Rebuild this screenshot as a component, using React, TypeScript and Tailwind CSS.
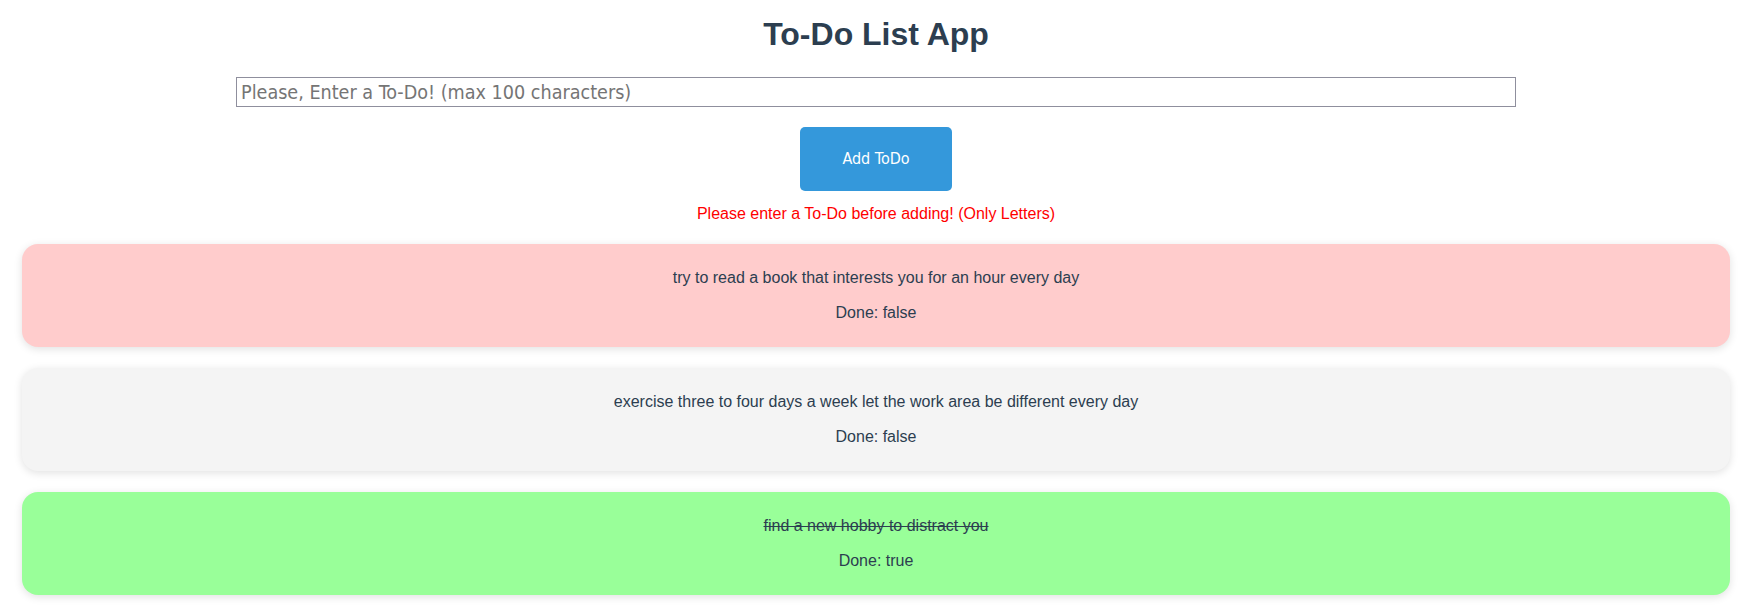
const todos = [
  { text: "try to read a book that interests you for an hour every day", done: false, bg: "bg-[#ffcccc]" },
  { text: "exercise three to four days a week let the work area be different every day", done: false, bg: "bg-[#f4f4f4]" },
  { text: "find a new hobby to distract you", done: true, bg: "bg-[#99ff99]" },
]

export default function App() {
  return (
    <div className="min-h-screen bg-white">
      <div className="flex w-full flex-col items-center pt-[16px] font-['Liberation_Sans',Arial,sans-serif] text-[#2c3e50]">
        <h1 className="text-[32px] leading-[37px] font-bold">To-Do List App</h1>

        <input
          type="text"
          placeholder="Please, Enter a To-Do! (max 100 characters)"
          className="mt-[24px] h-[30px] w-[1280px] border border-[#8f8f9d] px-[4px] font-['DejaVu_Sans_Condensed','DejaVu_Sans',sans-serif] text-[19.6px] text-[#2c3e50] outline-none placeholder:text-[#757575]"
        />

        <button className="mt-[20px] h-[64px] w-[152px] rounded-[5px] bg-[#3498db] font-['DejaVu_Sans_Condensed','DejaVu_Sans',sans-serif] text-[16px] text-white">
          Add ToDo
        </button>

        <p className="mt-[14px] text-[16px] leading-[18px] text-[#ff0000]">
          Please enter a To-Do before adding! (Only Letters)
        </p>

        <div className="mt-[21px] flex w-full flex-col gap-[21px] px-[22px]">
          {todos.map((t) => (
            <div
              key={t.text}
              className={`flex flex-col items-center gap-[17px] rounded-[16px] pt-[25px] pb-[25px] text-[16px] leading-[18px] shadow-[0_2px_8px_rgba(0,0,0,0.12)] ${t.bg}`}
            >
              <p className={t.done ? "line-through" : ""}>{t.text}</p>
              <p>Done: {t.done ? "true" : "false"}</p>
            </div>
          ))}
        </div>
      </div>
    </div>
  )
}
